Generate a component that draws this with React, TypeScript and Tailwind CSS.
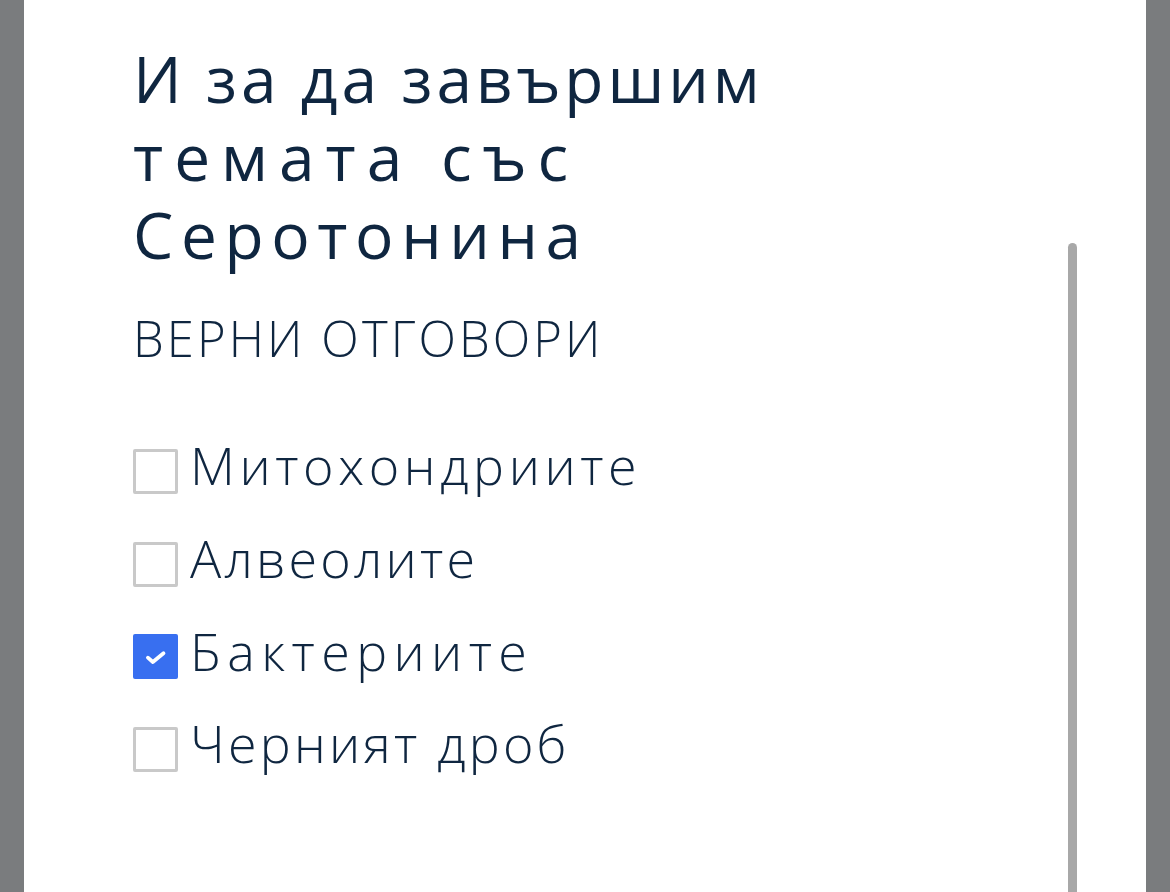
import React from "react";

const options = [
  { label: "Митохондриите", checked: false, track: "tracking-[4.6px]" },
  { label: "Алвеолите", checked: false, track: "tracking-[3.2px]" },
  { label: "Бактериите", checked: true, track: "tracking-[6.4px]" },
  { label: "Черният дроб", checked: false, track: "tracking-[3.2px]" },
];

function Box({ checked }: { checked: boolean }) {
  if (checked) {
    return (
      <div className="w-[45px] h-[45px] shrink-0 bg-[#386ff0] rounded-[2px] flex items-center justify-center">
        <svg width="30" height="30" viewBox="0 0 24 24" fill="none">
          <path d="M5.5 12.5l4 3.5L18 9" stroke="white" strokeWidth="3" strokeLinecap="round" strokeLinejoin="round" />
        </svg>
      </div>
    );
  }
  return <div className="w-[45px] h-[45px] shrink-0 border-[3px] border-[#c9c9c9] rounded-[2px] bg-white" />;
}

export default function App() {
  return (
    <div lang="bg" className="w-[1170px] h-[892px] flex overflow-hidden" style={{ fontFamily: '"Open Sans", "Noto Sans", sans-serif' }}>
      <div className="w-[24px] bg-[#7a7c7e]" />
      <div className="relative flex-1 bg-white pl-[109px] pt-[40px] text-[#0f2640]">
        <h1 className="text-[64px] leading-[78px] font-medium">
          <span className="block tracking-[3.9px]">И за да завършим</span>
          <span className="block tracking-[11px]">темата със</span>
          <span className="block tracking-[7.6px]">Серотонина</span>
        </h1>
        <div className="mt-[34px] text-[49px] leading-[60px] font-light tracking-[3.1px]">ВЕРНИ ОТГОВОРИ</div>
        <div className="mt-[57px] flex flex-col">
          {options.map((o) => (
            <div key={o.label} className="h-[92.7px] flex items-center gap-[12px]">
              <Box checked={o.checked} />
              <span className={`text-[52px] leading-none font-light pb-[12px] ${o.track}`}>{o.label}</span>
            </div>
          ))}
        </div>
        <div className="absolute left-[1044px] top-[243px] w-[9px] bottom-0 rounded-t-full bg-[#a8a8a8]" />
      </div>
      <div className="w-[24px] bg-[#7a7c7e]" />
    </div>
  );
}
